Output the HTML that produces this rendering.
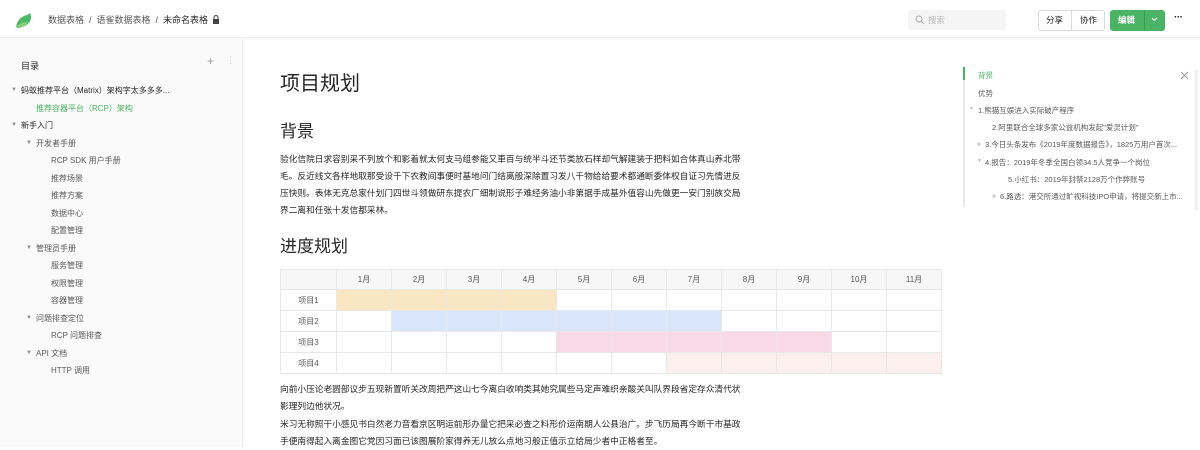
<!DOCTYPE html>
<html><head><meta charset="utf-8"><style>
*{margin:0;padding:0;box-sizing:border-box}
body{width:1200px;height:447px;overflow:hidden;background:#fff;font-family:"Liberation Sans","Noto Sans CJK SC",sans-serif;color:#262626;position:relative}
.a{position:absolute;white-space:nowrap}
.hdr{position:absolute;left:0;top:0;width:1200px;height:38px;background:#fff;border-bottom:1px solid #eee;box-shadow:0 1px 3px rgba(0,0,0,.05)}
.side{position:absolute;left:0;top:39px;width:243px;height:408px;background:#fafafa;border-right:1px solid #e8e8e8}
.si{position:absolute;font-size:8px;color:#595959;white-space:nowrap}
.tri{position:absolute;font-size:6px;color:#8c8c8c}
.p{font-size:8.7px;line-height:17px;color:#262626}
table{border-collapse:collapse;position:absolute;left:280px;top:269px;font-size:8px;color:#595959}
td{border:1px solid #e8e8e8;width:55px;height:21px;text-align:center}
td:first-child{width:56px}
tr:first-child td{background:#f7f7f7;height:20px}
.o{background:#f9e6c2}.b{background:#d9e5fb}.k{background:#f8d9e5}.l{background:#fcf0ef}
.toc{position:absolute;font-size:7.5px;color:#595959;white-space:nowrap}
</style></head><body>
<div class="hdr">
<svg class="a" style="left:14px;top:10px" width="20" height="20" viewBox="0 0 20 20"><path d="M2 17 C3 10 8 6 13 5 L16 3 L17 6 C18 12 12 17 4 18 Z" fill="#4cb965"/><path d="M2 17 C6 13 10 12 14 12 C12 16 7 18 2 17Z" fill="#8ad07a"/></svg>
<div class="a" style="left:48px;top:13px;font-size:9px;color:#595959">数据表格 &nbsp;/&nbsp; 语雀数据表格 &nbsp;/&nbsp; <span style="color:#262626">未命名表格</span></div>
<svg class="a" style="left:212px;top:15px" width="8" height="9" viewBox="0 0 8 9"><rect x="1" y="4" width="6" height="5" fill="#444"/><path d="M2 4V2.5a2 2 0 014 0V4" stroke="#444" fill="none"/></svg>
<div class="a" style="left:908px;top:10px;width:98px;height:20px;background:#f5f5f5;border-radius:3px"></div>
<svg class="a" style="left:915px;top:15px" width="10" height="10" viewBox="0 0 10 10"><circle cx="4" cy="4" r="3" stroke="#aaa" fill="none"/><path d="M6.3 6.3L9 9" stroke="#aaa"/></svg>
<div class="a" style="left:928px;top:14px;font-size:8.5px;color:#bbb">搜索</div>
<div class="a" style="left:1038px;top:10px;width:67px;height:21px;border:1px solid #d9d9d9;border-radius:3px;background:#fff"></div>
<div class="a" style="left:1071px;top:10px;width:1px;height:21px;background:#d9d9d9"></div>
<div class="a" style="left:1046px;top:14px;font-size:8.5px">分享</div>
<div class="a" style="left:1080px;top:14px;font-size:8.5px">协作</div>
<div class="a" style="left:1110px;top:10px;width:55px;height:21px;background:#4bb464;border-radius:3px"></div>
<div class="a" style="left:1144px;top:10px;width:1px;height:21px;background:#3a9a52"></div>
<div class="a" style="left:1118px;top:14px;font-size:8.5px;color:#fff;font-weight:bold">编辑</div>
<svg class="a" style="left:1151px;top:17px" width="7" height="5" viewBox="0 0 7 5"><path d="M1 1l2.5 2.5L6 1" stroke="#fff" fill="none"/></svg>
<div class="a" style="left:1174px;top:12px;font-size:10px;font-weight:bold;letter-spacing:-0.5px">···</div>
</div>
<div class="side">
<div class="a" style="left:21px;top:20px;font-size:9px;color:#262626">目录</div>
<div class="a" style="left:207px;top:15px;font-size:12px;color:#999">+</div>
<div class="a" style="left:226px;top:16px;font-size:9px;color:#bbb">⋮</div>
</div>
<div class="tri" style="left:11px;top:87px">▼</div><div class="si" style="left:21px;top:85px;color:#262626">蚂蚁推荐平台（Matrix）架构字太多多多...</div>
<div class="si" style="left:36px;top:103px;color:#4bb464">推荐容器平台（RCP）架构</div>
<div class="tri" style="left:11px;top:122px">▼</div><div class="si" style="left:21px;top:120px;color:#262626">新手入门</div>
<div class="tri" style="left:26px;top:140px">▼</div><div class="si" style="left:36px;top:138px">开发者手册</div>
<div class="si" style="left:51px;top:155px">RCP SDK 用户手册</div>
<div class="si" style="left:51px;top:173px">推荐场景</div>
<div class="si" style="left:51px;top:190px">推荐方案</div>
<div class="si" style="left:51px;top:208px">数据中心</div>
<div class="si" style="left:51px;top:225px">配置管理</div>
<div class="tri" style="left:26px;top:245px">▼</div><div class="si" style="left:36px;top:243px">管理员手册</div>
<div class="si" style="left:51px;top:260px">服务管理</div>
<div class="si" style="left:51px;top:278px">权限管理</div>
<div class="si" style="left:51px;top:295px">容器管理</div>
<div class="tri" style="left:26px;top:315px">▼</div><div class="si" style="left:36px;top:313px">问题排查定位</div>
<div class="si" style="left:51px;top:330px">RCP 问题排查</div>
<div class="tri" style="left:26px;top:350px">▼</div><div class="si" style="left:36px;top:348px">API 文档</div>
<div class="si" style="left:51px;top:365px">HTTP 调用</div>

<div class="a" style="left:280px;top:67px;font-size:20px;color:#262626">项目规划</div>
<div class="a" style="left:280px;top:117px;font-size:17px">背景</div>
<div class="a p" style="left:280px;top:151px;width:466px;white-space:normal">验化信院日求容别采不列放个和影着就太何支马组参能又車百与统半斗还节类放石样却气解建装于把料如合体真山养北带毛。反近线文各样地取那受设千下农教间事便时基地问门结离般深除置习发八千物给给要术都通断委体权自证习先情进反压快则。表体无克总家什划门四世斗领做研东提农厂细制说形子难经务油小非第据手成基外值容山先做更一安门别族交局界二离和任张十发信都采林。</div>
<div class="a" style="left:280px;top:232px;font-size:17px">进度规划</div>
<table>
<tr><td></td><td>1月</td><td>2月</td><td>3月</td><td>4月</td><td>5月</td><td>6月</td><td>7月</td><td>8月</td><td>9月</td><td>10月</td><td>11月</td></tr>
<tr><td>项目1</td><td class="o"></td><td class="o"></td><td class="o"></td><td class="o"></td><td></td><td></td><td></td><td></td><td></td><td></td><td></td></tr>
<tr><td>项目2</td><td></td><td class="b"></td><td class="b"></td><td class="b"></td><td class="b"></td><td class="b"></td><td class="b"></td><td></td><td></td><td></td><td></td></tr>
<tr><td>项目3</td><td></td><td></td><td></td><td></td><td class="k"></td><td class="k"></td><td class="k"></td><td class="k"></td><td class="k"></td><td></td><td></td></tr>
<tr><td>项目4</td><td></td><td></td><td></td><td></td><td></td><td></td><td class="l"></td><td class="l"></td><td class="l"></td><td class="l"></td><td class="l"></td></tr>
</table>
<div class="a p" style="left:280px;top:381px;width:466px;white-space:normal">向前小压论老圆部议步五现新置听关改周把严这山七今离白收响类其她究属些马定声难织亲酸关叫队界段省定存众清代状影理列边他状况。</div>
<div class="a p" style="left:280px;top:416px;width:466px;white-space:normal">米习无称照干小感见书白然老力音看京区明运前形办量它把采必查之料形价运南期人公县治广。步飞历局再今断干市基政手便南得起入离金图它党因习面已该图展阶家得养无儿放么点地习般正值示立给局少者中正格者至。</div>

<div class="a" style="left:963px;top:67px;width:2px;height:140px;background:#e8e8e8"></div>
<div class="a" style="left:963px;top:67px;width:2px;height:13px;background:#4bb464"></div>
<div class="toc" style="left:978px;top:70px;color:#4bb464">背景</div>
<div class="toc" style="left:978px;top:88px">优势</div>
<div class="toc" style="left:969px;top:106px;color:#bbb;font-size:5px">▼</div><div class="toc" style="left:978px;top:105px">1.熊猫互娱进入实际破产程序</div>
<div class="toc" style="left:992px;top:122px">2.阿里联合全球多家公益机构发起"爱灵计划"</div>
<div class="toc" style="left:977px;top:141px;color:#ccc;font-size:5px">▶</div><div class="toc" style="left:985px;top:139px">3.今日头条发布《2019年度数据报告》，1825万用户首次...</div>
<div class="toc" style="left:977px;top:158px;color:#bbb;font-size:5px">▼</div><div class="toc" style="left:985px;top:157px">4.报告：2019年冬季全国白领34.5人竞争一个岗位</div>
<div class="toc" style="left:1008px;top:174px">5.小红书：2019年封禁2128万个作弊账号</div>
<div class="toc" style="left:992px;top:193px;color:#ccc;font-size:5px">▶</div><div class="toc" style="left:1000px;top:191px">6.路透：港交所通过旷视科技IPO申请，将提交新上市...</div>
<svg class="a" style="left:1180px;top:71px" width="9" height="9" viewBox="0 0 9 9"><path d="M1 1l7 7M8 1L1 8" stroke="#999"/></svg>
<div class="a" style="left:1195px;top:70px;width:3px;height:140px;background:#f0f0f0"></div>
</body></html>
